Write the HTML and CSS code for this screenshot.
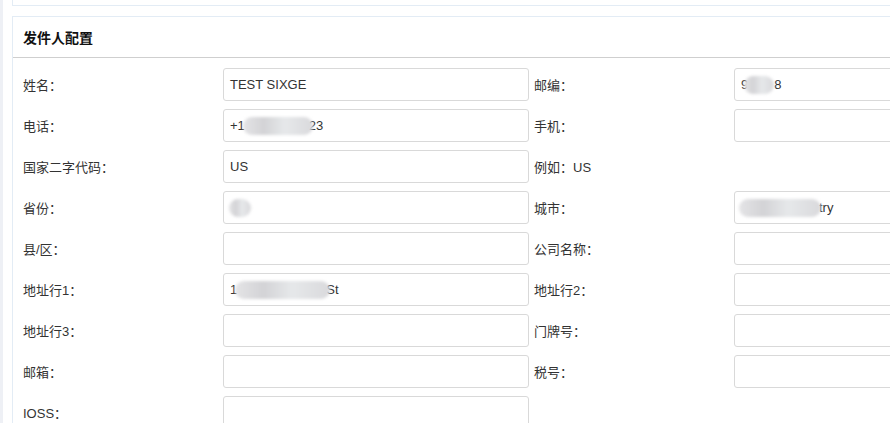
FILE: index.html
```html
<!DOCTYPE html>
<html lang="zh-CN">
<head>
<meta charset="utf-8">
<title>发件人配置</title>
<link rel="stylesheet" href="styles.css">
</head>
<body>
<div class="main">
  <div class="card card-top"></div>
  <div class="card">
    <div class="card-header">发件人配置</div>
    <div class="form">
      <div class="label">姓名：</div>
      <div class="cell"><div class="input">TEST SIXGE</div></div>
      <div class="label label-r">邮编：</div>
      <div class="cell"><div class="input">9<span class="mask m-zip"></span>8</div></div>

      <div class="label">电话：</div>
      <div class="cell"><div class="input">+1<span class="mask m-tel"></span>23</div></div>
      <div class="label label-r">手机：</div>
      <div class="cell"><div class="input"></div></div>

      <div class="label">国家二字代码：</div>
      <div class="cell"><div class="input">US</div></div>
      <div class="label label-r">例如：US</div>
      <div class="cell"></div>

      <div class="label">省份：</div>
      <div class="cell"><div class="input"><span class="mask m-prov"></span></div></div>
      <div class="label label-r">城市：</div>
      <div class="cell"><div class="input"><span class="mask m-city"></span>try</div></div>

      <div class="label">县/区：</div>
      <div class="cell"><div class="input"></div></div>
      <div class="label label-r">公司名称：</div>
      <div class="cell"><div class="input"></div></div>

      <div class="label">地址行1：</div>
      <div class="cell"><div class="input">1<span class="mask m-addr"></span>St</div></div>
      <div class="label label-r">地址行2：</div>
      <div class="cell"><div class="input"></div></div>

      <div class="label">地址行3：</div>
      <div class="cell"><div class="input"></div></div>
      <div class="label label-r">门牌号：</div>
      <div class="cell"><div class="input"></div></div>

      <div class="label">邮箱：</div>
      <div class="cell"><div class="input"></div></div>
      <div class="label label-r">税号：</div>
      <div class="cell"><div class="input"></div></div>

      <div class="label">IOSS：</div>
      <div class="cell"><div class="input"></div></div>
      <div class="label label-r"></div>
      <div class="cell"></div>
    </div>
  </div>
</div>
</body>
</html>
```

FILE: styles.css
```css
* { box-sizing: border-box; }
html, body {
  margin: 0;
  padding: 0;
  height: 100%;
  overflow: hidden;
}
body {
  background: #eef0f5;
  font-family: "Liberation Sans", "Noto Sans CJK SC", sans-serif;
  font-size: 13px;
  color: #333;
}
.main {
  margin-left: 3px;
  background: #fff;
  height: 100%;
  padding-left: 9px;
  overflow: hidden;
}
.card {
  border: 1px solid #e3ecf5;
  border-right: none;
  background: #fff;
}
.card-top {
  height: 6px;
  border-top: none;
  margin-bottom: 10px;
}
.card-header {
  height: 41px;
  border-bottom: 1px solid #cfcfcf;
  padding-left: 10px;
  padding-bottom: 1px;
  display: flex;
  align-items: center;
  font-weight: bold;
  font-size: 14px;
  color: #111;
}
.form {
  display: grid;
  grid-template-columns: 210px 311px 200px 311px;
  grid-auto-rows: 33px;
  row-gap: 8px;
  padding-top: 10px;
}
.label {
  display: flex;
  align-items: center;
  padding-left: 10px;
  color: #333;
  white-space: nowrap;
}
.label-r {
  padding-left: 0;
}
.cell {
  display: flex;
}
.input {
  width: 306px;
  height: 33px;
  border: 1px solid #d9d9d9;
  border-radius: 3px;
  padding-left: 6px;
  display: flex;
  align-items: center;
  color: #333;
  font-size: 13px;
  white-space: nowrap;
  overflow: hidden;
}
.mask {
  display: inline-block;
  height: 18px;
  border-radius: 9px;
  background: linear-gradient(90deg, #e4e4e6, #d3d3d6 30%, #e6e8ea 60%, #d9d9dc);
  filter: blur(1.5px);
}
.m-zip { width: 30px; margin-left: -4px; }
.m-tel { width: 70px; margin-left: -2px; margin-right: -4px; }
.m-prov { width: 22px; margin-left: -1px; }
.m-city { width: 82px; margin-left: -2px; margin-right: -2px; }
.m-addr { width: 95px; margin-left: -2px; margin-right: -4px; }
```
